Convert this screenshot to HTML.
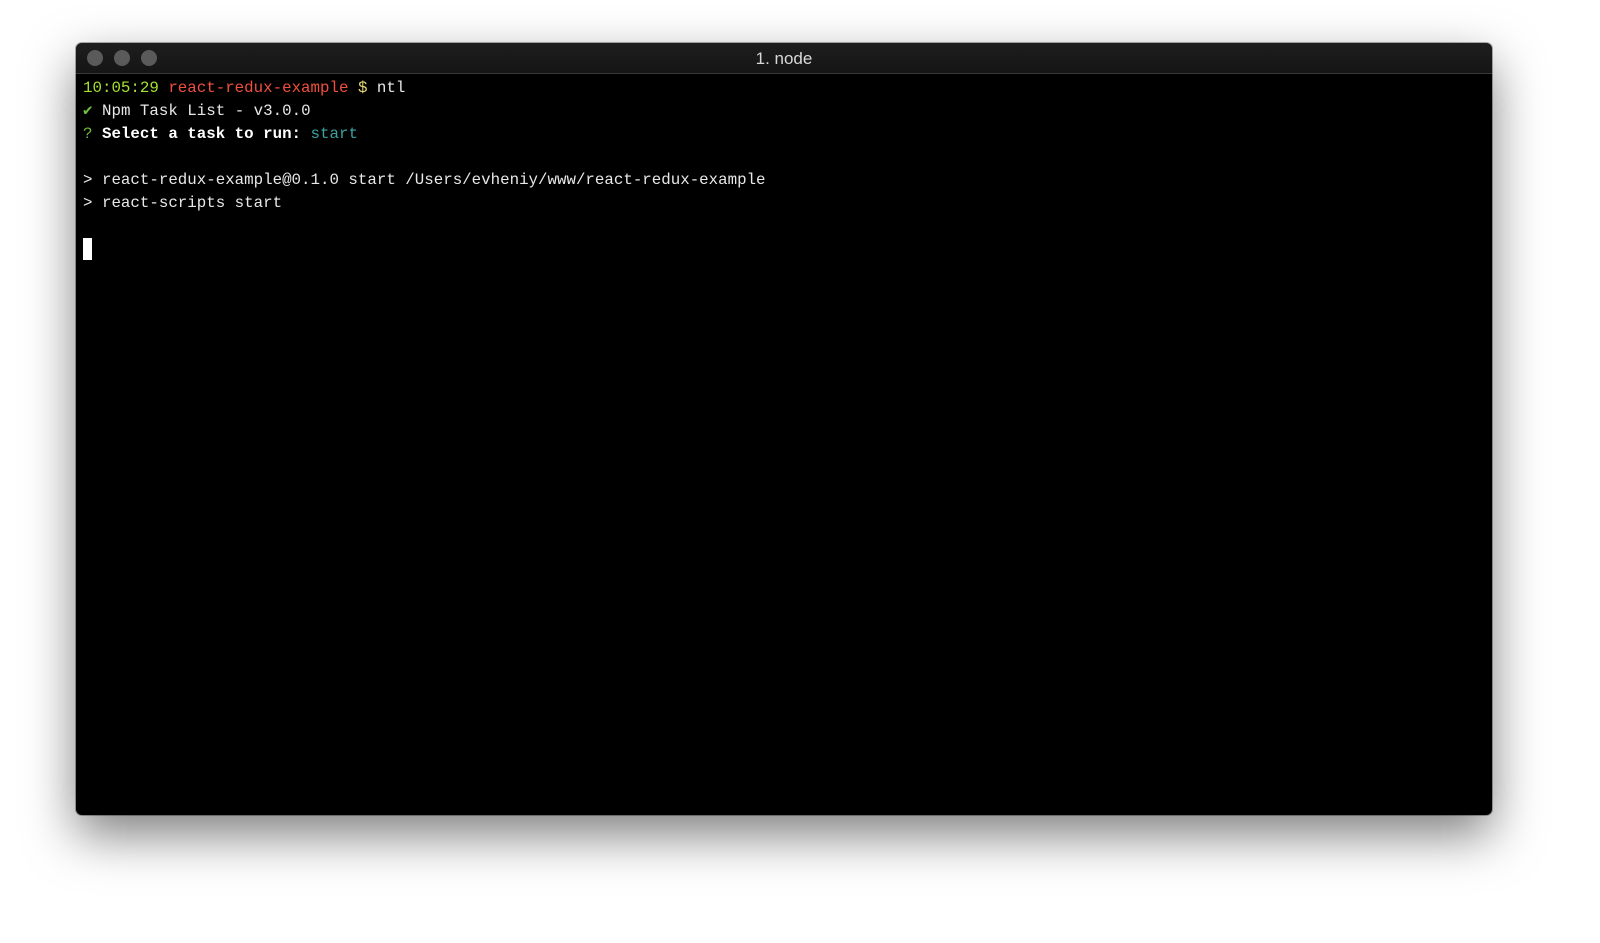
<!DOCTYPE html>
<html><head><style>
html,body{margin:0;padding:0;background:#fff;width:1600px;height:943px;overflow:hidden}
.win{position:absolute;left:76px;top:43px;width:1416px;height:772px;background:#000;border-radius:6px;overflow:hidden;box-shadow:0 20px 50px rgba(0,0,0,0.5),0 0 0 1px rgba(0,0,0,0.3)}
.bar{height:30px;background:linear-gradient(#1e1e1e,#151515);border-bottom:1px solid #3a3a3a;position:relative}
.dot{position:absolute;top:7px;width:16px;height:16px;border-radius:50%;background:#5a5a5a}
.title{position:absolute;left:0;right:0;top:6px;text-align:center;color:#d8d8d8;font:17px "Liberation Sans",sans-serif}
.term{position:absolute;left:7px;top:34px;font:15.8px/23px "Liberation Mono",monospace;color:#e8e8e8;white-space:pre}
.g{color:#a6e22e}.r{color:#f0503c}.y{color:#e6db74}.c{color:#3aa3a3}.b{font-weight:bold;color:#fff}.gc{color:#6fbf3f}
.cur{display:inline-block;width:9px;height:22px;background:#fff;vertical-align:-5px}
</style></head><body>
<div class="win">
<div class="bar"><div class="dot" style="left:11px"></div><div class="dot" style="left:38px"></div><div class="dot" style="left:65px"></div><div class="title">1. node</div></div>
<div class="term"><span class="g">10:05:29</span> <span class="r">react-redux-example</span> <span class="y">$</span> ntl
<span class="gc">✔</span> Npm Task List - v3.0.0
<span class="gc">?</span> <span class="b">Select a task to run:</span> <span class="c">start</span>

&gt; react-redux-example@0.1.0 start /Users/evheniy/www/react-redux-example
&gt; react-scripts start

<span class="cur"></span></div>
</div>
</body></html>
